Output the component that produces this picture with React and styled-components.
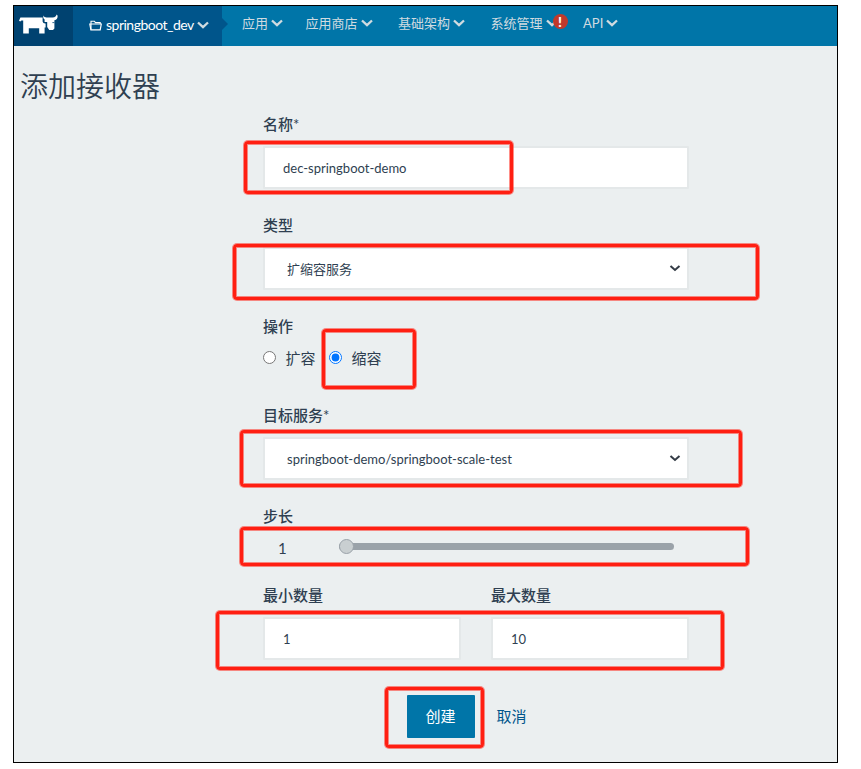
import { useState } from 'react';
import styled, { createGlobalStyle } from 'styled-components';

const GlobalStyle = createGlobalStyle`
  * {
    box-sizing: border-box;
  }
  body {
    margin: 0;
    background: #fff;
    font-family: Lato, 'Noto Sans CJK SC', sans-serif;
    color: #2f3f51;
  }
  input, select, button {
    font-family: inherit;
    color: inherit;
  }
`;

const Page = styled.div`
  width: 825px;
  height: 758px;
  margin: 5px 0 0 13px;
  border: 1px solid #000;
  background: #ebeff0;
`;

const Header = styled.header`
  display: flex;
  height: 40px;
  background: #0075a8;
`;

const Logo = styled.div`
  width: 59px;
  padding: 8px 0 0 5px;
  background: #004270;
`;

const Project = styled.div`
  position: relative;
  display: flex;
  align-items: center;
  width: 149px;
  padding: 0 0 2px 16px;
  background: #00558b;
  color: #fff;
  font-size: 14px;
  line-height: 20px;

  span {
    margin: 0 3px 0 4px;
    letter-spacing: -0.5px;
  }

  &::after {
    content: '';
    position: absolute;
    left: 100%;
    top: 12px;
    border: 6px solid transparent;
    border-right-width: 0;
    border-left-color: #00558b;
  }
`;

const Nav = styled.nav`
  display: flex;
  gap: 25.5px;
  padding-left: 20px;
`;

const NavItem = styled.a`
  position: relative;
  display: flex;
  align-items: center;
  gap: 3px;
  height: 34px;
  color: #d0dbe0;
  font-size: 13px;
  line-height: 20px;

  &:first-child {
    margin-right: -3px;
  }
`;

const Badge = styled.span`
  position: absolute;
  right: -10px;
  top: 8px;
  width: 15px;
  height: 15px;
  border-radius: 50%;
  background: #c0392b;
  color: #fff;
  font-size: 14px;
  font-weight: 900;
  line-height: 15px;
  text-align: center;
`;

const Title = styled.h1`
  margin: 20px 0 8px 6px;
  font-size: 28px;
  font-weight: 350;
  line-height: 40px;
`;

const Form = styled.form`
  width: 426px;
  margin-left: 249px;
`;

const Field = styled.div`
  margin-bottom: 26px;
`;

const Label = styled.label`
  display: block;
  height: 20px;
  margin-bottom: 12px;
  font-size: 15px;
  font-weight: 500;
  line-height: 20px;

  sup {
    font-size: 15px;
    font-weight: 400;
    line-height: 0;
    vertical-align: baseline;
  }
`;

const Control = styled.div`
  position: relative;
  display: flex;
  align-items: flex-start;
  height: ${(props) => props.$height || 43}px;
`;

const Input = styled.input`
  width: 100%;
  height: 43px;
  padding: 0 18px;
  border: 2px solid #e4e8e9;
  border-radius: 1px;
  background: #fff;
  font-size: 13px;
  outline: none;
`;

const Select = styled.select`
  width: 100%;
  height: 43px;
  padding: 0 22px;
  border: 2px solid #e4e8e9;
  border-radius: 1px;
  background: #fff;
  font-size: 13px;
  appearance: none;
  outline: none;
`;

const SelectArrow = styled.svg`
  position: absolute;
  right: 8px;
  top: 17px;
`;

const Radio = styled.label`
  display: flex;
  align-items: center;
  height: 19px;
  margin-right: 13.5px;
  font-size: 15px;
  line-height: 20px;

  input {
    width: 13px;
    height: 13px;
    margin: 0 9.5px 0 0;
  }
`;

const StepValue = styled.span`
  width: 76px;
  padding-left: 15px;
  font-size: 15px;
  line-height: 21px;
`;

const Slider = styled.input`
  width: 335px;
  height: 7px;
  margin: 5px 0 0;
  border-radius: 4px;
  background: #9aa2a9;
  appearance: none;

  &::-webkit-slider-thumb {
    width: 15px;
    height: 15px;
    border: 1px solid #9aa2a9;
    border-radius: 50%;
    background: #c9cfd1;
    appearance: none;
  }
`;

const Columns = styled.div`
  position: relative;
  display: flex;
  gap: 30px;
`;

const Column = styled.div`
  width: 198px;
`;

const Footer = styled.div`
  position: relative;
  display: flex;
  align-items: center;
  gap: 21.5px;
  height: 43px;
  margin-top: 35px;
  padding-left: 144px;
`;

const CreateBtn = styled.button`
  width: 68px;
  height: 43px;
  padding: 0 1px 2px 0;
  border: 0;
  border-radius: 1px;
  background: #0075a8;
  color: #fff;
  font-size: 15px;
`;

const CancelLink = styled.a`
  padding-bottom: 2px;
  color: #00558b;
  font-size: 15px;
  line-height: 20px;
`;

// hand drawn red frame around the fields to fill in
const Mark = styled.div`
  position: absolute;
  left: ${(props) => props.$x + 1}px;
  top: ${(props) => props.$y + 1}px;
  width: ${(props) => props.$w - 2}px;
  height: ${(props) => props.$h - 2}px;
  border: 3px solid #ff1f12;
  border-radius: 4px;
  box-shadow: 0 0 0 1px rgba(255, 31, 18, 0.5), inset 0 0 0 1px rgba(255, 31, 18, 0.5);
  pointer-events: none;
`;

function Arrow({ color }) {
  return (
    <svg width='12' height='8' viewBox='0 0 12 8' fill='none'>
      <path d='M1 1.5 L6 6.2 L11 1.5' stroke={color} strokeWidth='2.3' />
    </svg>
  );
}

function CowLogo() {
  return (
    <svg width='40' height='21' viewBox='0 0 40 21' fill='#fff'>
      <path d='M0 6.8 L1.4 3.4 H23.6 V7.4 Q24 9.6 26.6 9.4 V13.6 H25.6 V19.6 H20.2 V14.2 H9.8 V19.6 H4.2 V6.4 H2.4 L1.2 7.4 Z' />
      <path d='M24.4 1.4 Q25 3.4 27.6 3.4 H33.6 Q37.4 3.4 37.4 0.6 L38.6 1.4 Q39 5.4 35.4 6.2 V14.4 L34 16 H30.2 L28.2 13 V8 H25.6 V5.6 Q23.6 4.4 24.4 1.4 Z' />
      <path d='M33.4 8.6 H35.4' stroke='#004270' strokeWidth='0.8' />
    </svg>
  );
}

function Folder() {
  return (
    <svg width='13' height='11' viewBox='0 0 13 11' fill='none' stroke='#fff'>
      <path d='M2 9.5 V1.2 H5.4 L6.4 2.6 H11.2 V4' strokeWidth='1.1' />
      <path d='M0.8 4 H12.3 L11.2 9.8 H1.9 Z' strokeWidth='1.2' />
    </svg>
  );
}

const menus = [
  { title: '应用' },
  { title: '应用商店' },
  { title: '基础架构' },
  { title: '系统管理', alert: true },
  { title: 'API' },
];

function App() {
  let [name, setName] = useState('dec-springboot-demo');
  let [action, setAction] = useState('down');
  let [step, setStep] = useState(1);
  let [min, setMin] = useState('1');
  let [max, setMax] = useState('10');

  return (
    <Page>
      <GlobalStyle />
      <Header>
        <Logo>
          <CowLogo />
        </Logo>
        <Project>
          <Folder />
          <span>springboot_dev</span>
          <Arrow color='#d0dbe0' />
        </Project>
        <Nav>
          {menus.map((menu) => (
            <NavItem key={menu.title}>
              {menu.title}
              <Arrow color='#d0dbe0' />
              {menu.alert && <Badge>!</Badge>}
            </NavItem>
          ))}
        </Nav>
      </Header>

      <Title>添加接收器</Title>

      <Form onSubmit={(e) => e.preventDefault()}>
        <Field>
          <Label>
            名称<sup>*</sup>
          </Label>
          <Control>
            <Input value={name} onChange={(e) => setName(e.target.value)} />
            <Mark $x={-20} $y={-6} $w={271} $h={55} />
          </Control>
        </Field>

        <Field>
          <Label>类型</Label>
          <Control>
            <Select>
              <option>扩缩容服务</option>
            </Select>
            <SelectArrow width='12' height='9' viewBox='0 0 12 9' fill='none'>
              <path d='M1.5 2 L6 6 L10.5 2' stroke='#343c46' strokeWidth='2' />
            </SelectArrow>
            <Mark $x={-31} $y={-4} $w={528} $h={58} />
          </Control>
        </Field>

        <Field>
          <Label>操作</Label>
          <Control $height={31}>
            <Radio>
              <input
                type='radio'
                checked={action == 'up'}
                onChange={() => setAction('up')}
              />
              扩容
            </Radio>
            <Radio>
              <input
                type='radio'
                checked={action == 'down'}
                onChange={() => setAction('down')}
              />
              缩容
            </Radio>
            <Mark $x={58} $y={-20} $w={96} $h={62} />
          </Control>
        </Field>

        <Field>
          <Label>
            目标服务<sup>*</sup>
          </Label>
          <Control>
            <Select>
              <option>springboot-demo/springboot-scale-test</option>
            </Select>
            <SelectArrow width='12' height='9' viewBox='0 0 12 9' fill='none'>
              <path d='M1.5 2 L6 6 L10.5 2' stroke='#343c46' strokeWidth='2' />
            </SelectArrow>
            <Mark $x={-24} $y={-8} $w={504} $h={59} />
          </Control>
        </Field>

        <Field>
          <Label>步长</Label>
          <Control $height={21}>
            <StepValue>{step}</StepValue>
            <Slider
              type='range'
              min='1'
              max='10'
              value={step}
              onChange={(e) => setStep(e.target.value)}
            />
            <Mark $x={-24} $y={-12} $w={511} $h={41} />
          </Control>
        </Field>

        <Columns>
          <Column>
            <Label>最小数量</Label>
            <Input value={min} onChange={(e) => setMin(e.target.value)} />
          </Column>
          <Column>
            <Label>最大数量</Label>
            <Input value={max} onChange={(e) => setMax(e.target.value)} />
          </Column>
          <Mark $x={-48} $y={25} $w={510} $h={61} />
        </Columns>

        <Footer>
          <CreateBtn>创建</CreateBtn>
          <CancelLink>取消</CancelLink>
          <Mark $x={121} $y={-9} $w={101} $h={63} />
        </Footer>
      </Form>
    </Page>
  );
}

export default App;
